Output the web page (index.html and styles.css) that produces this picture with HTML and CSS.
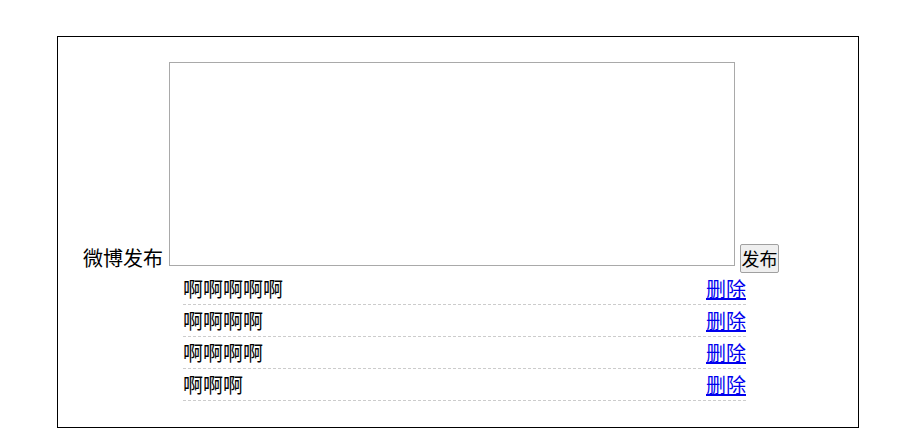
FILE: index.html
```html
<!DOCTYPE html>
<html lang="zh-CN">
  <head>
    <meta charset="UTF-8" />
    <meta name="viewport" content="width=device-width, initial-scale=1.0" />
    <title>微博发布</title>
    <link rel="stylesheet" href="styles.css">
  </head>
  <body>
    <div class="box">
      <div class="post-row">
        <label class="post-label" for="txt">微博发布</label>
        <textarea id="txt" class="post-text"></textarea>
        <button class="post-btn">发布</button>
      </div>
      <ul class="post-list">
        <li><span>啊啊啊啊啊</span><a href="#">删除</a></li>
        <li><span>啊啊啊啊</span><a href="#">删除</a></li>
        <li><span>啊啊啊啊</span><a href="#">删除</a></li>
        <li><span>啊啊啊</span><a href="#">删除</a></li>
      </ul>
    </div>
  </body>
</html>
```

FILE: styles.css
```css
* {
  box-sizing: border-box;
}

body {
  margin: 8px;
  font-family: "Noto Sans CJK SC", "Liberation Sans", sans-serif;
  color: #000;
  background: #fff;
}

.box {
  width: 802px;
  height: 392px;
  margin: 28px 0 0 49px;
  padding: 25px;
  border: 1px solid #000;
}

.post-row {
  display: flex;
  align-items: flex-end;
}

.post-label {
  width: 80px;
  margin: 0 6px 1px 0;
  font-size: 20px;
  line-height: 28px;
}

.post-text {
  width: 566px;
  height: 204px;
  margin: 0 5px 7px 0;
  border: 1px solid #a9a9a9;
  resize: none;
}

.post-btn {
  height: 29px;
  padding: 0;
  width: 39px;
  font-family: inherit;
  font-size: 18px;
  line-height: 25px;
  border: 1px solid #a0a0a0;
  border-radius: 2px;
  background: #efefef;
}

.post-list {
  width: 563px;
  margin: 0 0 0 100px;
  padding: 0;
  list-style: none;
}

.post-list li {
  display: flex;
  justify-content: space-between;
  height: 32px;
  font-size: 20px;
  line-height: 31px;
  border-bottom: 1px dashed #ccc;
}

.post-list a {
  color: #00e;
}
```
